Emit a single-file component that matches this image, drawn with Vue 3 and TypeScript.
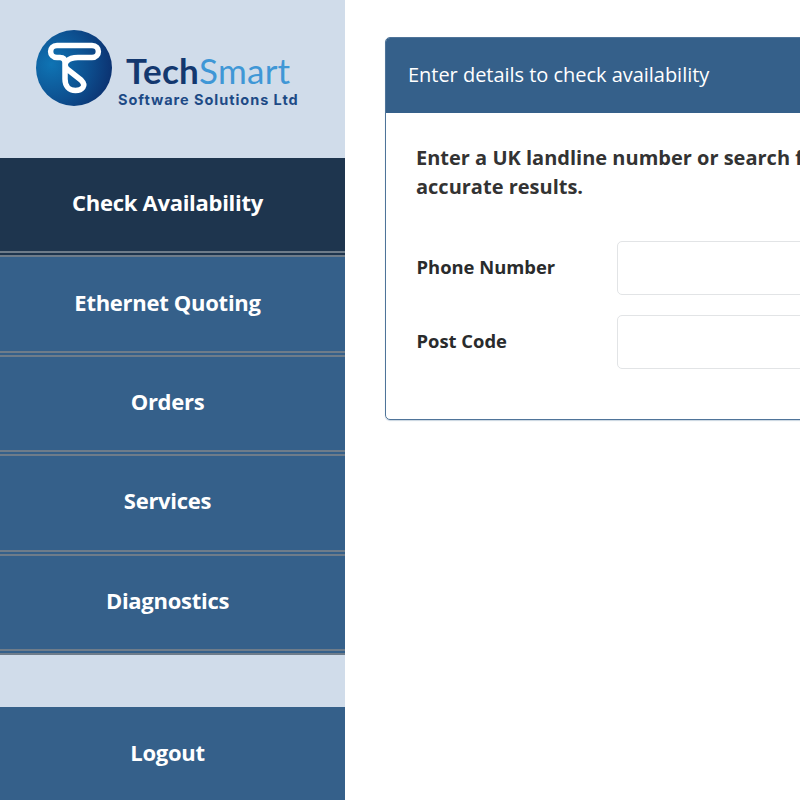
<script setup lang="ts">
const navItems = [
  { label: "Check Availability", active: true },
  { label: "Ethernet Quoting", active: false },
  { label: "Orders", active: false },
  { label: "Services", active: false },
  { label: "Diagnostics", active: false },
];
</script>

<template>
  <div class="page">
    <aside class="sidebar">
      <div class="logo">
        <svg width="270" height="80" viewBox="0 0 270 80">
          <defs>
            <radialGradient id="ball" cx="0.2" cy="0.45" r="0.9">
              <stop offset="0" stop-color="#0f74b4" />
              <stop offset="0.55" stop-color="#0d4f8f" />
              <stop offset="1" stop-color="#0b2a68" />
            </radialGradient>
          </defs>
          <circle cx="38" cy="38" r="38" fill="url(#ball)" />
          <path
            d="M29 49 L29 33 C29 29 27 27.5 24 27.5 L21 27.5 C12.5 27.5 12.5 15.5 21 15.5 L56 15.5 C64.5 15.5 64.5 27.5 56 27.5 L42 27.5 C32 27.5 26 33 31 39 L45 50 C51 56 46 60.5 39.5 60.5 C33 60.5 29 56 29 49"
            fill="none"
            stroke="#fff"
            stroke-width="5.5"
            stroke-linejoin="round"
          />
          <text x="90" y="54" class="brand"><tspan class="tech">Tech</tspan><tspan class="smart">Smart</tspan></text>
          <text x="82" y="75" class="tagline">Software Solutions Ltd</text>
        </svg>
      </div>

      <nav class="nav">
        <a v-for="item in navItems" :key="item.label" class="nav-item" :class="{ active: item.active }">
          {{ item.label }}
        </a>
      </nav>

      <a class="logout">Logout</a>
    </aside>

    <main class="content">
      <section class="card">
        <header class="card-head">Enter details to check availability</header>
        <div class="card-body">
          <p class="intro">Enter a UK landline number or search for an address using a postcode for the most accurate results.</p>
          <div class="field">
            <label>Phone Number</label>
            <input type="text" />
          </div>
          <div class="field">
            <label>Post Code</label>
            <input type="text" />
          </div>
        </div>
      </section>
    </main>
  </div>
</template>

<style>
html,
body {
  margin: 0;
  overflow: hidden;
  background: #fff;
}
</style>

<style scoped>
.page {
  display: flex;
  width: 800px;
  height: 800px;
  overflow: hidden;
  font-family: "Open Sans", "Noto Sans", sans-serif;
}

.sidebar {
  flex: 0 0 345px;
  display: flex;
  flex-direction: column;
  background: #d0dcea;
}

.logo {
  height: 158px;
  box-sizing: border-box;
  padding: 30px 0 0 36px;
}

.logo svg {
  display: block;
}

.brand {
  font-family: Lato, sans-serif;
  font-size: 35px;
  letter-spacing: 0.25px;
}

.tech {
  fill: #13386f;
  font-weight: 700;
}

.smart {
  fill: #3f97d6;
  font-weight: 400;
}

.tagline {
  font-family: Inter, sans-serif;
  font-size: 14.5px;
  font-weight: 700;
  fill: #1d4a86;
  letter-spacing: 0.95px;
}

.nav {
  display: flex;
  flex-direction: column;
}

.nav-item {
  display: flex;
  align-items: center;
  justify-content: center;
  box-sizing: border-box;
  height: 99.4px;
  padding: 0 10px 5px 0;
  background: #35608a;
  border-bottom: 6px double #6e7c8a;
  color: #fff;
  font-size: 22px;
  font-weight: 700;
  letter-spacing: -0.28px;
}

.nav-item.active {
  background: #1e354e;
}

.logout {
  display: flex;
  align-items: center;
  justify-content: center;
  margin-top: auto;
  height: 93px;
  padding: 0 10px 4px 0;
  box-sizing: border-box;
  background: #35608a;
  color: #fff;
  font-size: 22px;
  font-weight: 700;
  letter-spacing: -0.28px;
}

.content {
  flex: 1;
  min-width: 0;
  padding: 37px 0 0 40px;
}

.card {
  width: 1000px;
  height: 383px;
  box-sizing: border-box;
  border: 1px solid #4f7499;
  border-radius: 5px;
  box-shadow: 0 1px 1px rgba(120, 150, 180, 0.4);
}

.card-head {
  display: flex;
  align-items: center;
  box-sizing: border-box;
  height: 75px;
  padding: 0 0 2px 22px;
  background: #35608a;
  border-radius: 4px 4px 0 0;
  color: #fff;
  font-size: 20px;
  letter-spacing: -0.03px;
}

.card-body {
  padding: 30px 30px 0;
}

.intro {
  margin: 0 0 40px;
  width: 880px;
  color: #333;
  font-size: 20px;
  font-weight: 700;
  line-height: 29px;
}

.field {
  display: flex;
  align-items: center;
  margin-bottom: 20px;
}

.field label {
  flex: 0 0 200.5px;
  padding: 0 0 4px 0.5px;
  color: #292b2c;
  font-size: 18.4px;
  font-weight: 700;
}

.field input {
  width: 500px;
  height: 54px;
  box-sizing: border-box;
  border: 1px solid #e2e4e6;
  border-radius: 5px;
  background: #fff;
}
</style>
